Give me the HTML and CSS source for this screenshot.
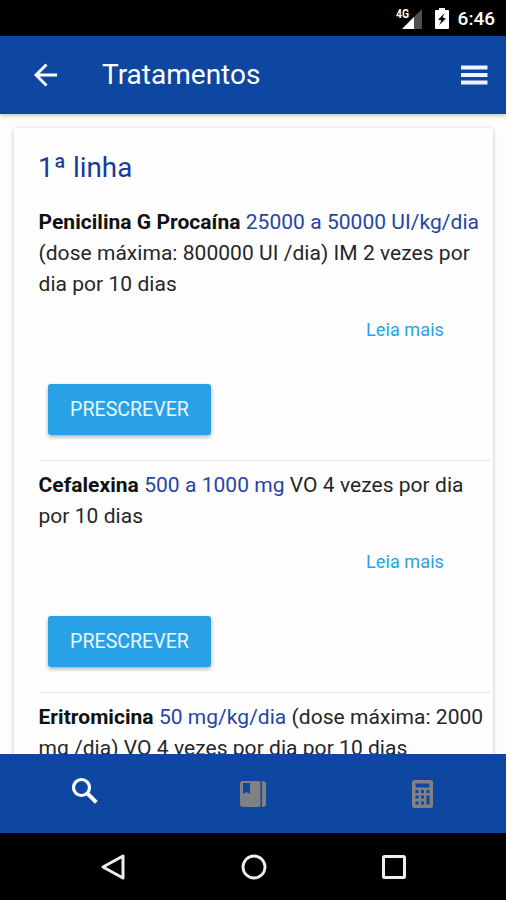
FILE: index.html
```html
<!DOCTYPE html>
<html lang="pt-BR">
<head>
<meta charset="utf-8">
<title>Tratamentos</title>
<link rel="stylesheet" href="styles.css">
</head>
<body>
<div class="screen">
  <div class="status">
    <svg class="signal" width="28" height="24" viewBox="0 0 28 24">
      <path fill="#505050" d="M26 3v20H6z"/>
      <path fill="#fff" d="M18 11v12H6z"/>
      <rect width="13" height="13" fill="#000"/>
      <text x="0" y="12" textLength="13" lengthAdjust="spacingAndGlyphs">4G</text>
    </svg>
    <svg class="battery" width="14" height="21" viewBox="0 0 14 21">
      <path fill="#fff" d="M4 0h6v2h3q1 0 1 1v17q0 1-1 1H1q-1 0-1-1V3q0-1 1-1h3z"/>
      <path fill="#000" d="M9.8 5 3.2 11.5l3.2.9L4 17.2l6.9-6.6-3.4-1z"/>
    </svg>
    <span class="clock">6:46</span>
  </div>
  <header class="appbar">
    <svg class="back" width="24" height="24" viewBox="0 0 24 24"><path fill="none" stroke="#fff" stroke-width="2.900" d="M23 12H3M12.500 1.500 2 12l10.500 10.500"/></svg>
    <h1 class="title">Tratamentos</h1>
    <svg class="menu" width="27" height="20" viewBox="0 0 27 20"><path fill="#f3f3ff" d="M0 .5h26.500v4H0zM0 8h26.500v4H0zM0 15.500h26.500v4H0z"/></svg>
  </header>
  <main class="content">
    <section class="card">
      <h2 class="line-title">1ª linha</h2>
      <article class="item">
        <p class="dose"><b>Penicilina G Procaína</b> <em>25000 a 50000 UI/kg/dia</em><br>(dose máxima: 800000 UI /dia) IM 2 vezes por<br>dia por 10 dias</p>
        <a class="more">Leia mais</a>
        <button class="prescribe">PRESCREVER</button>
      </article>
      <article class="item">
        <p class="dose"><b>Cefalexina</b> <em>500 a 1000 mg</em> VO 4 vezes por dia<br>por 10 dias</p>
        <a class="more">Leia mais</a>
        <button class="prescribe">PRESCREVER</button>
      </article>
      <article class="item">
        <p class="dose"><b>Eritromicina</b> <em>50 mg/kg/dia</em> (dose máxima: 2000<br>mg /dia) VO 4 vezes por dia por 10 dias</p>
      </article>
    </section>
  </main>
  <nav class="tabs">
    <div class="tab"><svg class="search" width="28" height="28" viewBox="0 0 28 28"><circle cx="10.500" cy="10.500" r="8" fill="none" stroke="#fff" stroke-width="3.200"/><path d="m16 16 9.300 9.300" stroke="#fff" stroke-width="4"/></svg></div>
    <div class="tab"><svg class="book" width="26" height="26" viewBox="0 0 26 26"><path fill="#7f8183" fill-rule="evenodd" d="M3 0h16q1.500 0 1.500 2v22q0 2-1.500 2H3q-3 0-3-3V3q0-3 3-3zM3 2v11l3.500-2 3.500 2V2z"/><path fill="#7f8183" d="M22 0q4 0 4 3v20q0 3-4 3z"/></svg></div>
    <div class="tab"><svg class="calc" width="21" height="28" viewBox="0 0 21 28"><path fill="#7f8183" fill-rule="evenodd" d="M2.500 0h16Q21 0 21 2.500v23Q21 28 18.500 28h-16Q0 28 0 25.500v-23Q0 0 2.500 0zM3.500 3.500v4h14v-4zM3.500 10v3h3v-3zM9 10v3h3v-3zM14.500 10v3h3v-3zM3.500 15.500v3h3v-3zM9 15.500v3h3v-3zM14.500 15.500v9h3v-9zM3.500 21.500v3h3v-3zM9 21.500v3h3v-3z"/></svg></div>
  </nav>
  <div class="sysnav">
    <svg width="26" height="28" viewBox="0 0 26 28"><path fill="none" stroke="#eee" stroke-width="3" stroke-linejoin="round" d="M23 3v22L3 14z"/></svg>
    <svg width="26" height="28" viewBox="0 0 26 28"><circle cx="13" cy="14" r="11" fill="none" stroke="#eee" stroke-width="2.800"/></svg>
    <svg width="26" height="28" viewBox="0 0 26 28"><rect x="2.500" y="3.500" width="21" height="21" rx="1" fill="none" stroke="#eee" stroke-width="3"/></svg>
  </div>
</div>
</body>
</html>
```
FILE: styles.css
```css
* { box-sizing: border-box; }
body { margin: 0; font-family: Roboto, "Liberation Sans", sans-serif; }
.screen { width: 506px; height: 900px; display: flex; flex-direction: column; overflow: hidden; background: #fdfdfd; }
.status { height: 36px; flex: none; background: #000; display: flex; align-items: center; justify-content: flex-end; padding-right: 11px; }
.signal { margin: 0 11px 0 0; font: bold 13px Roboto, sans-serif; fill: #fff; }
.battery { margin-right: 9px; }
.clock { color: #fff; font-size: 19px; font-weight: 500; line-height: 36px; padding-top: 2px; }
.appbar { height: 78px; flex: none; background: #0d47a1; display: flex; align-items: center; padding: 0 18px 0 34px; box-shadow: 0 1px 5px rgba(0,0,0,.3); z-index: 1; }
.title { flex: 1; margin: 0 0 0 44px; color: #fff; font-size: 28px; font-weight: 400; line-height: 40px; }
.content { flex: 1; min-height: 0; overflow: hidden; padding: 14px 13px 0 14px; }
.card { height: 900px; background: #fefefe; border-radius: 3px; box-shadow: 0 1px 4px rgba(0,0,0,.24); padding: 20px 2px 0 25px; }
.line-title { margin: 0 0 0 -1px; height: 49px; color: #183a9a; font-size: 27.800px; font-weight: 400; line-height: 40px; }
.item { padding-top: 9px; border-top: 1px solid #e8e8e8; display: flex; flex-direction: column; align-items: flex-start; }
.line-title + .item { border-top-color: transparent; }
.dose { margin: 0 0 0 -.5px; font-size: 21px; line-height: 31px; letter-spacing: .04px; color: #262626; white-space: nowrap; }
.dose b { font-weight: 700; color: #111; }
.dose em { font-style: normal; color: #2346a5; }
.more { align-self: flex-end; margin: 15px 47px 0 0; color: #2aa1e6; font-size: 18px; line-height: 30px; letter-spacing: .1px; }
.prescribe { width: 163px; height: 51px; margin: 39px 0 25px 9px; padding: 0; border: 0; border-radius: 3px; background: #29a1e7; color: #e9f7ff; font: 400 19.600px/48px Roboto, sans-serif; box-shadow: 0 2px 4px rgba(0,0,0,.32); }
.tabs { height: 79px; flex: none; background: #0d47a1; display: grid; grid-template-columns: repeat(3, 1fr); align-items: center; justify-items: center; }
.tab svg { display: block; }
.search { margin: -5px 0 0 2px; }
.calc { margin-left: 1px; }
.sysnav { height: 67px; flex: none; background: #000; display: flex; align-items: center; justify-content: space-between; padding: 0 99px 0 100px; }
```
